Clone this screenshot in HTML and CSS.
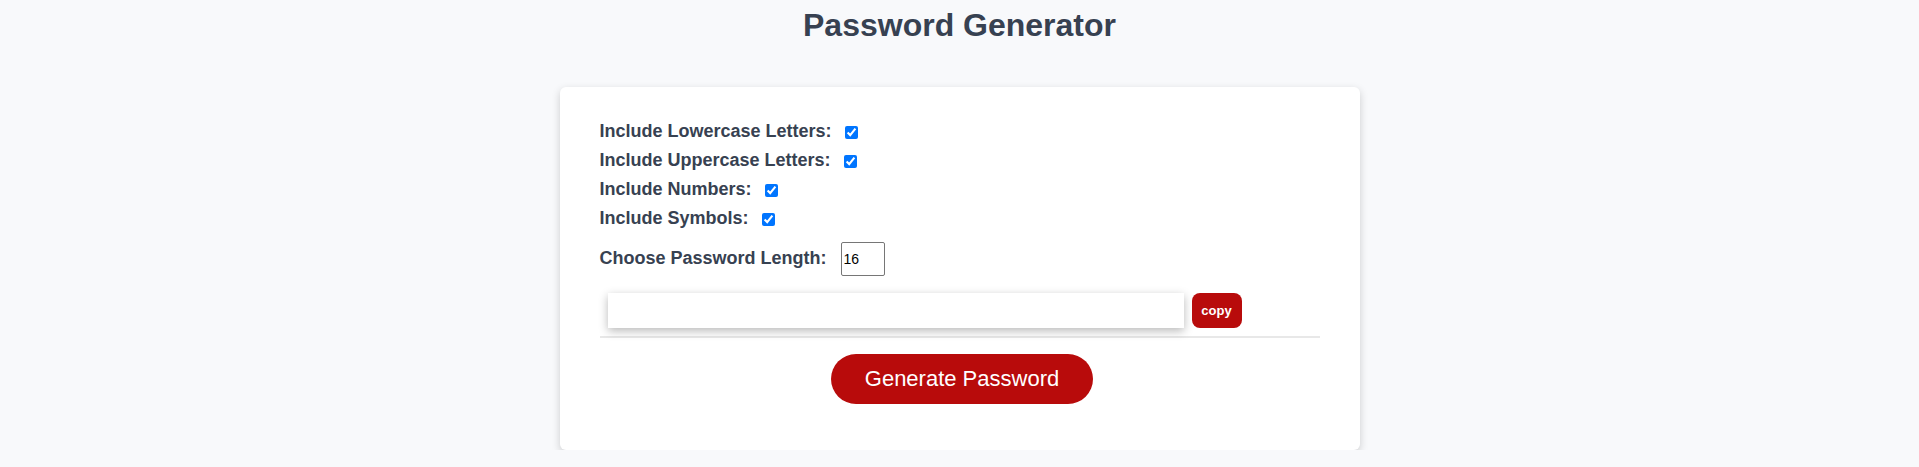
FILE: index.html
```html
<!DOCTYPE html>
<html lang="en">
<head>
<meta charset="utf-8">
<title>Password Generator</title>
<link rel="stylesheet" href="styles.css">
</head>
<body>
  <h1 class="title">Password Generator</h1>
  <div class="card">
    <div class="options">
      <div class="option">
        <label class="label" for="lower">Include Lowercase Letters:</label>
        <input class="check" type="checkbox" id="lower" checked>
      </div>
      <div class="option">
        <label class="label" for="upper">Include Uppercase Letters:</label>
        <input class="check" type="checkbox" id="upper" checked>
      </div>
      <div class="option">
        <label class="label" for="numbers">Include Numbers:</label>
        <input class="check" type="checkbox" id="numbers" checked>
      </div>
      <div class="option">
        <label class="label" for="symbols">Include Symbols:</label>
        <input class="check" type="checkbox" id="symbols" checked>
      </div>
    </div>
    <div class="length-row">
      <label class="label" for="length">Choose Password Length:</label>
      <input class="length" type="number" id="length" value="16">
    </div>
    <div class="result-row">
      <input class="result" type="text" readonly>
      <button class="copy" type="button">copy</button>
    </div>
    <div class="actions">
      <button class="generate" type="button">Generate Password</button>
    </div>
  </div>
</body>
</html>
```

FILE: styles.css
```css
* {
  box-sizing: border-box;
}

body {
  margin: 0;
  background: #f8f9fb;
  font-family: "Liberation Sans", Arial, sans-serif;
  color: #374151;
}

.title {
  margin: 7px 0 0;
  height: 80px;
  font-size: 32px;
  font-weight: 700;
  text-align: center;
  color: #374151;
}

.card {
  width: 800px;
  margin: 0 auto;
  background: #ffffff;
  border-radius: 6px;
  box-shadow: 0 3px 9px rgba(0, 0, 0, 0.18);
  padding: 34px 40px 46px;
}

.options {
  display: flex;
  flex-direction: column;
  gap: 8px;
}

.option {
  display: flex;
  align-items: center;
  gap: 13px;
}

.label {
  font-size: 18px;
  font-weight: 700;
  color: #374151;
}

.check {
  width: 13px;
  height: 13px;
  margin: 2px 0 0;
}

.length-row {
  display: flex;
  align-items: baseline;
  gap: 14px;
  margin-top: 13px;
}

.length {
  width: 44px;
  height: 34px;
  border: 1px solid #767676;
  border-radius: 2px;
  padding: 1px 2px;
  font-family: "Liberation Sans", Arial, sans-serif;
  font-size: 14px;
  color: #000;
}

.result-row {
  display: flex;
  align-items: center;
  gap: 8px;
  margin-top: 17px;
  padding: 0 0 8px 8px;
  border-bottom: 2px solid #e8e8e8;
}

.result {
  width: 576px;
  height: 35px;
  border: none;
  background: #fff;
  box-shadow: 0 3px 9px rgba(0, 0, 0, 0.28);
  font-family: "Liberation Sans", Arial, sans-serif;
}

.copy {
  width: 50px;
  height: 35px;
  border: none;
  border-radius: 8px;
  background: #b80b0b;
  color: #ffffff;
  font-family: "Liberation Sans", Arial, sans-serif;
  font-size: 13px;
  font-weight: 700;
  padding: 0;
}

.actions {
  display: flex;
  justify-content: center;
  margin-top: 16px;
  padding-left: 5px;
}

.generate {
  height: 50px;
  padding: 0 34px;
  border: none;
  border-radius: 25px;
  background: #b80b0b;
  color: #ffffff;
  font-family: "Liberation Sans", Arial, sans-serif;
  font-size: 22px;
}
```
